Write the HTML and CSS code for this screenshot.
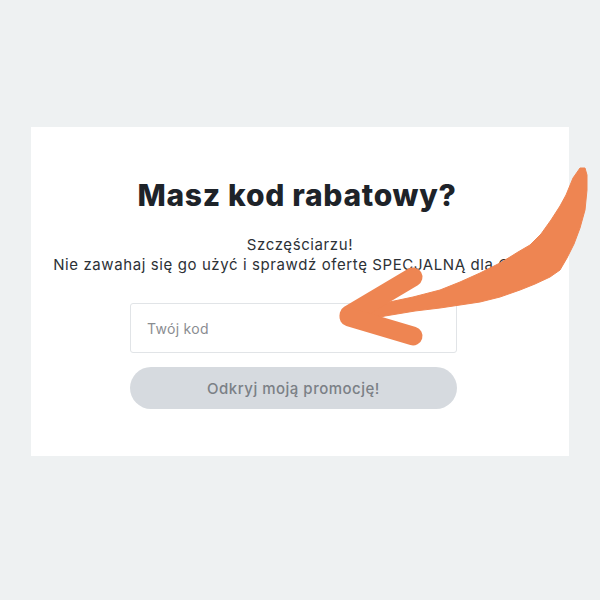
FILE: index.html
```html
<!DOCTYPE html>
<html lang="pl">
<head>
    <meta charset="UTF-8">
    <meta name="viewport" content="width=device-width, initial-scale=1.0">
    <title>Masz kod rabatowy?</title>
    <link rel="stylesheet" href="styles.css">
</head>
<body>
    <div class="page">
      <div class="promoCard">
        <h1 class="promoTitle">Masz kod rabatowy?</h1>
        <p class="promoText">Szczęściarzu!<br>Nie zawahaj się go użyć i sprawdź ofertę SPECJALNĄ dla Ciebie</p>
        <form class="promoForm">
          <input class="codeInput" type="text" placeholder="Twój kod">
          <button class="revealButton" type="button" disabled>Odkryj moją promocję!</button>
        </form>
      </div>
    </div>

    <!-- hand drawn arrow pointing at the code field -->
    <svg class="arrow" width="600" height="600" viewBox="0 0 600 600">
      <polygon fill="#ee8552" stroke="#ee8552" stroke-width="1" stroke-linejoin="round"
        points="580,168 573,178 566,195 560,206 551,220 541,234 530,245 518,252 510,257 500,263 480,273 460,282 440,290 413,297 380,304 352,311 356,323 385,316 415,311 440,308 460,305 480,302 500,297 520,290 535,284 550,277 560,270 567,258 574,244 580,228 585,210 587,190 587,175 585,168"/>
      <g stroke="#ee8552" stroke-width="19" stroke-linecap="round" fill="none">
        <line x1="349" y1="315" x2="413" y2="277"/>
        <line x1="349" y1="317" x2="413" y2="336"/>
      </g>
    </svg>
</body>
</html>
```

FILE: styles.css
```css
body {
    margin: 0;
    background-color: #eef1f2;
    font-family: Inter, "Noto Sans", sans-serif;
}
.page {
    padding: 127px 31px;
}
.promoCard {
    height: 329px;
    background-color: #ffffff;
    display: flex;
    flex-direction: column;
    align-items: center;
    padding-top: 48px;
    box-sizing: border-box;
}
.promoTitle {
    margin: 0 6px 0 0;
    font-size: 30px;
    line-height: 40px;
    font-weight: 800;
    letter-spacing: 0.7px;
    color: #1e2329;
}
.promoText {
    margin: 20px 0 0;
    font-size: 15px;
    line-height: 20px;
    letter-spacing: 0.6px;
    text-align: center;
    color: #2d3136;
    white-space: nowrap;
}
.promoForm {
    width: 327px;
    margin: 28px 13px 0 0;
    display: flex;
    flex-direction: column;
    gap: 14px;
}
.codeInput {
    height: 50px;
    box-sizing: border-box;
    border: 1px solid #e1e4e7;
    border-radius: 3px;
    padding: 0 16px;
    font-family: inherit;
    font-size: 14px;
    letter-spacing: 0.3px;
    color: #333;
}
.codeInput::placeholder {
    color: #8a8d91;
}
.revealButton {
    height: 42px;
    border: none;
    border-radius: 21px;
    background-color: #d6dadf;
    color: #7b8086;
    font-family: inherit;
    font-size: 15px;
    font-weight: 500;
    letter-spacing: 0.5px;
}
.arrow {
    position: absolute;
    top: 0;
    left: 0;
    pointer-events: none;
}
```
